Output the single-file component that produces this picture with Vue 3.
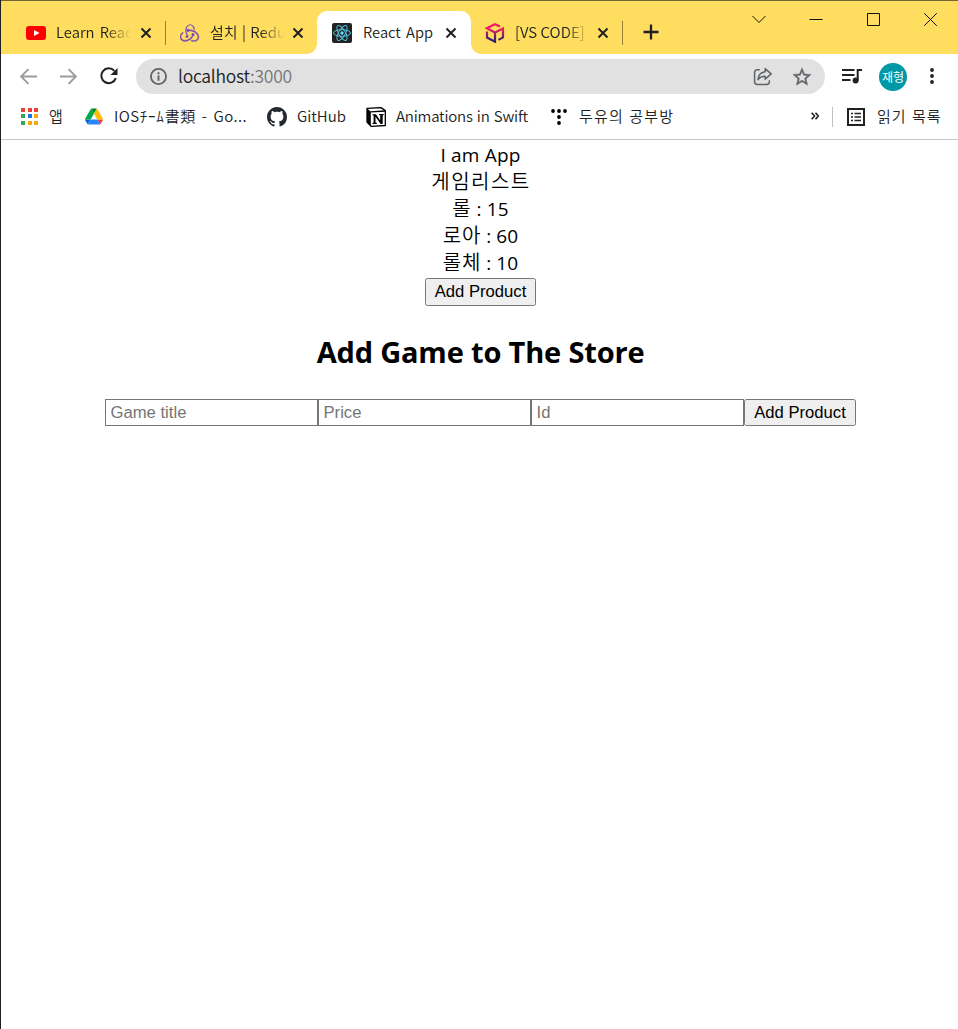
<script setup>
const games = [
  { name: '롤', price: 15 },
  { name: '로아', price: 60 },
  { name: '롤체', price: 10 },
]
const fields = ['Game title', 'Price', 'Id']
const appColors = ['#ea4335', '#ea4335', '#ea4335', '#34a853', '#1a73e8', '#fbaa05', '#34a853', '#fbaa05', '#fbaa05']
</script>

<template>
  <div class="window">
    <header class="tabs">
      <div class="tab first">
        <svg class="fav" viewBox="0 0 20 20"><rect y="3" width="20" height="14" rx="3" fill="#f00" /><path d="M8 7l5.500 3L8 13z" fill="#fff" /></svg>
        <span class="label fade t1">Learn Reac</span>
        <svg class="close" viewBox="0 0 12 12"><path d="M1.500 1.500l9 9M10.500 1.500l-9 9" /></svg>
      </div>
      <div class="tab second">
        <svg class="fav" viewBox="0 0 100 100" fill="#764abc" stroke="#764abc" stroke-width="2"><path d="M65.600 65.400c3.600-.4 6.300-3.500 6.200-7.100-.1-3.600-3.100-6.500-6.700-6.500h-.2c-3.700.1-6.600 3.200-6.500 6.900.1 1.800.9 3.400 2 4.600-4.100 8-10.300 13.900-19.700 18.800-6.400 3.300-13 4.600-19.600 3.700-5.400-.7-9.600-3.100-12.200-7-3.900-5.900-4.200-12.200-1-18.500 2.300-4.500 5.900-7.900 8.200-9.500-.5-1.600-1.200-4.200-1.600-6.200-17.500 12.600-15.700 29.700-10.400 37.800 4 6 12 9.800 20.900 9.800 2.400 0 4.800-.2 7.200-.8 15.400-3 27-12.100 33.400-26z" /><path d="M86.800 50.500c-9.200-10.700-22.700-16.600-38.100-16.600h-2c-1.100-2.200-3.400-3.600-5.900-3.600h-.2c-3.700.1-6.600 3.200-6.500 6.900.1 3.600 3.100 6.500 6.700 6.500h.3c2.700-.1 5-1.800 5.900-4.100h2.200c9.200 0 17.800 2.700 25.700 7.900 6 4 10.400 9.200 12.800 15.500 2.100 5.200 2 10.200-.2 14.500-3.400 6.500-9.100 10-16.600 10-4.800 0-9.400-1.500-11.800-2.500-1.300 1.200-3.700 3.100-5.400 4.300 5.200 2.400 10.500 3.700 15.500 3.700 11.500 0 20-6.300 23.300-12.700 3.500-7 3.200-19-5.700-29.800z" /><path d="M28.300 67.100c.1 3.600 3.100 6.500 6.700 6.500h.2c3.700-.1 6.600-3.200 6.500-6.900-.1-3.600-3.100-6.500-6.700-6.500h-.2c-.3 0-.6 0-.9.1-4.900-8.100-6.900-16.900-6.200-26.400.5-7.200 2.900-13.400 7.100-18.500 3.500-4.400 10.200-6.600 14.700-6.700 12.700-.2 18.100 15.600 18.500 21.900l5.900 1.800C72.500 19.100 62.900 9.200 53.700 9.200c-8.600 0-16.600 6.200-19.800 15.500-4.400 12.300-1.500 24.100 3.900 33.600-1 .7-9.600 7.300-9.500 8.800z" /></svg>
        <span class="label fade t2">설치 | Redu</span>
        <svg class="close" viewBox="0 0 12 12"><path d="M1.500 1.500l9 9M10.500 1.500l-9 9" /></svg>
      </div>
      <div class="tab active">
        <svg class="fav" viewBox="0 0 20 20"><rect width="20" height="20" rx="2" fill="#222" /><g fill="none" stroke="#53c1de" stroke-width="1"><ellipse cx="10" cy="10" rx="8.500" ry="3.300" /><ellipse cx="10" cy="10" rx="8.500" ry="3.300" transform="rotate(60 10 10)" /><ellipse cx="10" cy="10" rx="8.500" ry="3.300" transform="rotate(120 10 10)" /></g><circle cx="10" cy="10" r="1.700" fill="#61dafb" /></svg>
        <span class="label t3">React App</span>
        <svg class="close" viewBox="0 0 12 12"><path d="M1.500 1.500l9 9M10.500 1.500l-9 9" /></svg>
      </div>
      <div class="tab last">
        <svg class="fav" viewBox="0 0 20 20"><defs><linearGradient id="cube" x1="0" y1="0" x2="0" y2="20" gradientUnits="userSpaceOnUse"><stop offset=".3" stop-color="#f01b60" /><stop offset=".85" stop-color="#322275" /></linearGradient></defs><g fill="none" stroke="url(#cube)" stroke-width="2.200"><path d="M15 3.400L10 1.200 1.800 5.200 10 9.500l8-4v8.900L13.500 16.900M2 8.500v6l8 4.200V9.500" /></g></svg>
        <span class="label fade t4">[VS CODE]</span>
        <svg class="close" viewBox="0 0 12 12"><path d="M1.500 1.500l9 9M10.500 1.500l-9 9" /></svg>
      </div>
      <svg class="plus" viewBox="0 0 16 16"><path d="M8 .5v15M.5 8h15" /></svg>
      <div class="controls">
        <svg viewBox="0 0 14 14"><path d="M.5 4L7 10.500 13.500 4" /></svg>
        <svg viewBox="0 0 14 14"><path d="M.5 7.500h13" /></svg>
        <svg viewBox="0 0 14 14"><path d="M1.500 1.500h12v12h-12z" /></svg>
        <svg viewBox="0 0 14 14"><path d="M1.200 1.200l12.600 12.600M13.800 1.200L1.200 13.800" /></svg>
      </div>
    </header>

    <nav class="toolbar">
      <svg class="arrow back" viewBox="0 0 16 16"><path d="M16 8H1M8 1L1 8l7 7" /></svg>
      <svg class="arrow next" viewBox="0 0 16 16"><path d="M0 8h15M8 1l7 7-7 7" /></svg>
      <svg class="reload" viewBox="0 0 18 18"><path d="M15.800 11.200A7.400 7.400 0 1 1 14.300 3.800" fill="none" stroke="#202124" stroke-width="2" /><path d="M17.500 1v7h-7z" fill="#202124" /></svg>
      <div class="address">
        <svg class="info" viewBox="0 0 16 16"><circle cx="8" cy="8" r="7.100" fill="none" stroke="#5f6368" stroke-width="1.700" /><path d="M7.100 7h1.800v5H7.100zM7.100 4h1.800v1.800H7.100z" fill="#5f6368" /></svg>
        <span class="url">localhost<i>:3000</i></span>
        <svg class="share" viewBox="0 0 18 18"><path d="M6.500 2.500H4a2.500 2.500 0 0 0-2.500 2.500v9A2.500 2.500 0 0 0 4 16.500h9a2.500 2.500 0 0 0 2.500-2.500v-1.500" /><path d="M11.500 1.500L17.200 6.500l-5.700 5V8.700C8 8.700 6 10 4.700 12 5 8 7.500 5 11.500 4.500z" stroke-linejoin="round" /></svg>
        <svg class="star" viewBox="0 0 24 24"><path d="M22 9.240l-7.190-.62L12 2 9.190 8.630 2 9.240l5.460 4.730L5.820 21 12 17.270 18.180 21l-1.630-7.030L22 9.240zM12 15.400l-3.760 2.270 1-4.280-3.320-2.880 4.380-.38L12 6.100l1.710 4.040 4.380.38-3.320 2.880 1 4.280L12 15.400z" fill="#5f6368" stroke="#5f6368" stroke-width=".4" /></svg>
      </div>
      <svg class="queue" viewBox="0 0 20 16"><path d="M0 2h12.500M0 7h12.500M0 12h8.500M15.700 12.500V2H20" fill="none" stroke="#202124" stroke-width="2" /><circle cx="13.600" cy="12.600" r="3" fill="#202124" /></svg>
      <div class="avatar">재형</div>
      <svg class="more" viewBox="0 0 4 16"><circle cx="2" cy="2" r="1.900" /><circle cx="2" cy="8" r="1.900" /><circle cx="2" cy="14" r="1.900" /></svg>
    </nav>

    <nav class="bookmarks">
      <div class="apps"><b v-for="(c, i) in appColors" :key="i" :style="{ background: c }"></b></div>
      <span class="bm b1">앱</span>
      <svg class="drive" viewBox="0 0 87.300 78"><path d="M6.600 66.850l3.850 6.650c.8 1.400 1.950 2.500 3.300 3.300L27.500 53H0c0 1.550.4 3.100 1.200 4.500z" fill="#0066da" /><path d="M43.650 25L29.900 1.200c-1.350.8-2.500 1.900-3.300 3.300L1.200 48.500A9.060 9.060 0 0 0 0 53h27.500z" fill="#00ac47" /><path d="M73.550 76.800c1.350-.8 2.500-1.900 3.300-3.300l9.250-16c.8-1.400 1.200-2.950 1.200-4.500H59.800l5.850 11.500z" fill="#ea4335" /><path d="M43.650 25L57.400 1.200C56.050.4 54.500 0 52.900 0H34.400c-1.600 0-3.150.45-4.500 1.200z" fill="#00832d" /><path d="M59.800 53H27.500L13.750 76.800c1.350.8 2.900 1.200 4.500 1.200h50.800c1.600 0 3.150-.45 4.500-1.200z" fill="#2684fc" /><path d="M73.400 26.500L60.700 4.500c-.8-1.400-1.950-2.500-3.300-3.300L43.650 25 59.800 53h27.450c0-1.550-.4-3.100-1.200-4.500z" fill="#ffba00" /></svg>
      <span class="bm b2">IOS<i>ﾁｰﾑ</i>書類 - Go...</span>
      <svg class="github" viewBox="0 0 16 16"><path fill="#24292f" d="M8 0C3.580 0 0 3.580 0 8c0 3.540 2.290 6.530 5.470 7.590.4.070.55-.17.55-.38 0-.19-.01-.82-.01-1.490-2.010.37-2.530-.49-2.690-.94-.09-.23-.48-.94-.82-1.130-.28-.15-.68-.52-.01-.53.63-.01 1.080.58 1.230.82.72 1.210 1.870.87 2.330.66.07-.52.28-.87.51-1.070-1.780-.2-3.640-.89-3.640-3.950 0-.87.31-1.590.82-2.150-.08-.2-.36-1.020.08-2.120 0 0 .67-.21 2.200.82.64-.18 1.320-.27 2-.27s1.360.09 2 .27c1.530-1.040 2.200-.82 2.200-.82.44 1.100.16 1.920.08 2.120.51.56.82 1.270.82 2.150 0 3.070-1.870 3.750-3.650 3.950.29.25.54.73.54 1.480 0 1.070-.01 1.930-.01 2.200 0 .21.15.46.55.38A8.010 8.010 0 0 0 16 8c0-4.420-3.580-8-8-8z" /></svg>
      <span class="bm b3">GitHub</span>
      <svg class="notion" viewBox="0 0 20 20"><path d="M1 1.300L15 .6l4.300 3v14.900L5 19.300 1 15z" fill="#fff" stroke="#000" stroke-width="1.300" stroke-linejoin="round" /><path d="M1 1.300l3.800 3.400v14.500L1 15z" /><path d="M4.500 4.800L19.300 4" fill="none" stroke="#000" stroke-width="1.300" /><path d="M6.500 7.300H10l4.200 6.200V8.300L13 8V7h4.700v1l-1 .3V17h-2L9.500 9.700v5.900l1.400.4v1H6.500v-1l1.100-.4V8.500l-1.100-.2z" /></svg>
      <span class="bm b4">Animations in Swift</span>
      <svg class="tistory" viewBox="0 0 16 16"><circle cx="2" cy="2" r="1.900" /><circle cx="8" cy="2" r="1.900" /><circle cx="14" cy="2" r="1.900" /><circle cx="8" cy="8" r="1.900" /><circle cx="8" cy="14" r="1.900" /></svg>
      <span class="bm b5">두유의 공부방</span>
      <svg class="chevrons" viewBox="0 0 8 8"><path d="M.7.700L3.500 4 .7 7.300M4.500.700L7.300 4 4.500 7.300" /></svg>
      <span class="divider"></span>
      <svg class="reading" viewBox="0 0 18 18"><path d="M1 1h16v16H1z" fill="none" stroke="#202124" stroke-width="2" /><path d="M4 5.500h2M7.500 5.500H14M4 9h2M7.500 9H14M4 12.500h2M7.500 12.500H14" stroke="#202124" stroke-width="1.700" /></svg>
      <span class="bm b6">읽기 목록</span>
    </nav>

    <main>
      <div class="line top">I am App</div>
      <div class="line list">게임리스트</div>
      <div v-for="game in games" :key="game.name" class="line item"><span>{{ game.name }}</span> : {{ game.price }}</div>
      <button class="main-button">Add Product</button>
      <h2>Add Game to The Store</h2>
      <form @submit.prevent>
        <input v-for="f in fields" :key="f" :placeholder="f" />
        <button>Add Product</button>
      </form>
    </main>
  </div>
</template>

<style>
html, body { margin: 0; background: #fff; overflow: hidden; }
</style>

<style scoped>
* { box-sizing: border-box; }
.window { width: 958px; height: 1029px; border-left: 1px solid #202020; background: #fff; font-family: "Noto Sans CJK KR", "Noto Sans", sans-serif; color: #202124; overflow: hidden; }
svg { display: block; flex: none; }
.tabs { height: 54px; display: flex; background: #ffdd5e; border-top: 1px solid #736534; padding: 10px 0 0 11px; }
.tab { height: 43px; flex: none; display: flex; align-items: center; padding: 0 14px; position: relative; }
.first { width: 154px; }
.second { width: 151px; }
.active { width: 154px; background: #fff; border-radius: 10px 10px 0 0; padding-left: 15px; }
.last { width: 152px; }
.first::after, .last::after { content: ""; position: absolute; right: 0; top: 10px; width: 1px; height: 24px; background: #94803d; }
.active::before, .active::after { content: ""; position: absolute; bottom: 0; width: 10px; height: 10px; }
.active::before { left: -10px; background: radial-gradient(circle at 0 0, transparent 9.5px, #fff 10px); }
.active::after { right: -10px; background: radial-gradient(circle at 100% 0, transparent 9.5px, #fff 10px); }
.fav { width: 20px; height: 20px; }
.label { margin: -2px 0 0 10px; width: 76px; height: 24px; line-height: 24px; font-size: 15px; font-weight: 350; white-space: nowrap; }
.t1 { word-spacing: 2px; font-size: 14.800px; }
.t2 { word-spacing: 1px; }
.t3 { margin-left: 11px; word-spacing: 2px; font-size: 14.700px; }
.fade { -webkit-mask-image: linear-gradient(90deg, #000 50px, transparent 75px); mask-image: linear-gradient(90deg, #000 50px, transparent 75px); }
.close { width: 12px; height: 12px; margin-left: auto; fill: none; stroke: #202124; stroke-width: 2; }
.second .close { margin-right: -1px; }
.plus { width: 16px; height: 16px; margin: 13px 0 0 20px; stroke: #202124; stroke-width: 2.3; fill: none; }
.controls { margin-left: auto; display: flex; gap: 43px; padding-right: 21px; margin-top: 1px; }
.controls svg { width: 14px; height: 14px; fill: none; stroke: #111; stroke-width: 1; }
.toolbar { height: 45px; display: flex; align-items: center; padding-left: 19px; }
.arrow { width: 17px; height: 17px; fill: none; stroke: #999b9e; stroke-width: 1.8; margin-top: -1px; }
.next { margin-left: 23px; }
.reload { width: 18px; height: 18px; margin: -1px 0 0 23px; }
.address { width: 689px; height: 35px; margin-left: 18px; background: #e1e1e1; border-radius: 18px; display: flex; align-items: center; padding: 0 12px 0 14px; }
.info { width: 17px; height: 17px; }
.url { margin: -1px 0 0 11px; font-size: 17.500px; line-height: 30px; font-weight: 350; letter-spacing: -.25px; }
.url i { color: #74777a; font-style: normal; }
.share { width: 19px; height: 19px; margin-left: auto; fill: none; stroke: #5f6368; stroke-width: 1.4; }
.star { width: 22px; height: 22px; margin-left: 19px; }
.queue { width: 20px; height: 16px; margin: -1px 0 0 17px; }
.avatar { width: 28px; height: 28px; margin-left: 17px; border-radius: 50%; background: #0097a7; color: #fff; font-size: 12px; line-height: 27px; text-align: center; }
.more { width: 4px; height: 16px; margin: -1px 0 0 23px; fill: #202124; }
.bookmarks { height: 41px; display: flex; align-items: center; border-bottom: 1px solid #c8c8c8; padding: 0 0 5px 20px; }
.bm { flex: none; font-size: 15px; font-weight: 350; line-height: 24px; white-space: nowrap; margin-top: -2px; }
.bm i { font-style: normal; letter-spacing: .8px; }
.apps { width: 17px; height: 17px; display: grid; grid-template-columns: repeat(3, 4px); gap: 2.500px; margin-top: -1px; }
.apps b { height: 4px; }
.b1 { margin-left: 11px; width: 16px; }
.drive { width: 18px; height: 17px; margin-left: 20px; }
.b2 { margin-left: 11px; width: 134px; letter-spacing: .5px; word-spacing: 2.200px; }
.github { width: 20px; height: 20px; margin-left: 19px; }
.b3 { margin-left: 10px; width: 48px; }
.notion { width: 20px; height: 20px; margin-left: 21px; }
.b4 { margin-left: 10px; width: 133px; letter-spacing: -.2px; word-spacing: 1px; }
.tistory { width: 16px; height: 16px; margin-left: 22px; }
.b5 { margin-left: 12px; width: 95px; letter-spacing: 1.150px; word-spacing: 1px; }
.chevrons { width: 8px; height: 8px; margin: -1px 0 0 137px; fill: none; stroke: #202124; stroke-width: 1.6; }
.divider { width: 1px; height: 20px; margin-left: 13px; background: #c0c0c0; }
.reading { width: 18px; height: 18px; margin-left: 14px; }
.b6 { margin-left: 12px; letter-spacing: 1px; word-spacing: 1px; }
main { padding-top: 2px; color: #000; display: flex; flex-direction: column; align-items: center; padding-left: 2px; }
.line { font-family: "Open Sans", "Noto Sans CJK KR", sans-serif; font-size: 19px; line-height: 27px; height: 27px; white-space: pre; font-weight: 400; }
.list { height: 26px; line-height: 27px; font-weight: 350; font-size: 20px; letter-spacing: 1.500px; padding-left: 1px; }
.item { padding-top: 2px; letter-spacing: .1px; }
.item span { font-family: "Noto Sans CJK KR", sans-serif; font-weight: 350; font-size: 20px; letter-spacing: .8px; line-height: 20px; }
.top { height: 26px; letter-spacing: .2px; }
button, input { font: 16.670px/19px "Liberation Sans", Arial, sans-serif; height: 27px; border: 1px solid #767676; margin: 0; }
button { width: 112px; padding: 0; background: #efefef; color: #000; border-radius: 2.500px; }
.main-button { width: 111px; height: 28px; margin-top: 3px; padding-bottom: 1px; }
input { width: 213px; padding: 1px 4px 1px 4.500px; background: #fff; border-radius: 0; }
input::placeholder { color: #757575; opacity: 1; }
h2 { margin: 26px 0 0; height: 40px; font: 700 29px/39px "Open Sans", "Noto Sans", sans-serif; letter-spacing: -.17px; white-space: nowrap; }
form { display: flex; margin-top: 27px; }
</style>
